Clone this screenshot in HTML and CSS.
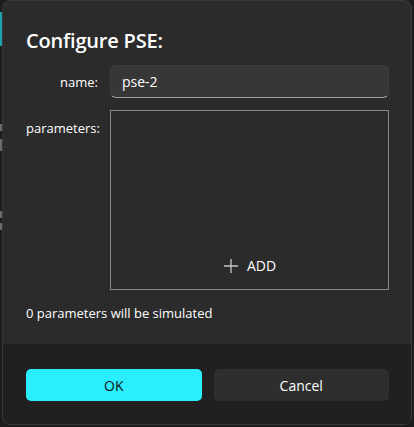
FILE: index.html
```html
<!DOCTYPE html>
<html>
<head>
<meta charset="utf-8">
<link rel="stylesheet" href="styles.css">
</head>
<body>
<div class="screen">
  <div class="strip">
    <div class="strip-gap g1"></div>
    <div class="strip-teal"></div>
    <div class="strip-gap g2"></div>
    <div class="strip-grey"></div>
    <div class="strip-gap g3"></div>
    <div class="strip-grey short"></div>
    <div class="strip-gap g4"></div>
    <div class="strip-grey"></div>
    <div class="strip-gap g5"></div>
    <div class="strip-grey"></div>
  </div>
  <div class="dialog">
    <div class="content">
      <h1 class="title">Configure PSE:</h1>
      <div class="form">
        <label class="label name-label">name:</label>
        <div class="input">pse-2</div>
        <label class="label params-label">parameters:</label>
        <div class="params">
          <button class="add">
            <svg class="plus" width="16" height="16" viewBox="0 0 16 16"><path d="M8 1v14M1 8h14" stroke="#c8c8c8" stroke-width="1.3" fill="none"/></svg>
            <span>ADD</span>
          </button>
        </div>
      </div>
      <p class="status">0 parameters will be simulated</p>
    </div>
    <div class="footer">
      <button class="btn ok">OK</button>
      <button class="btn cancel">Cancel</button>
    </div>
  </div>
</div>
</body>
</html>
```

FILE: styles.css
```css
html, body {
  margin: 0;
  padding: 0;
  background: #1c1c1c;
  width: 414px;
  height: 427px;
  overflow: hidden;
}
.screen {
  display: flex;
  font-family: "Open Sans", "Noto Sans", sans-serif;
  color: #ffffff;
}
.strip {
  width: 2px;
  display: flex;
  flex-direction: column;
}
.g1 { height: 12px; }
.strip-teal { height: 34px; background: #1aa3ad; }
.g2 { height: 78px; }
.strip-grey { height: 7px; background: #6a6a6a; }
.strip-grey.short { height: 12px; }
.g3 { height: 8px; }
.g4 { height: 60px; }
.g5 { height: 5px; }
.dialog {
  width: 410px;
  height: 425px;
  box-sizing: border-box;
  border: 1px solid #383838;
  border-radius: 8px;
  background: #2b2b2b;
  display: flex;
  flex-direction: column;
  overflow: hidden;
}
.content {
  flex: 1;
  padding: 26px 22px 0 23px;
}
.title {
  margin: 0;
  font-size: 20px;
  font-weight: 600;
  letter-spacing: -0.2px;
  line-height: 28px;
  color: #ffffff;
}
.form {
  margin-top: 10px;
  display: grid;
  grid-template-columns: 72px 279px;
  column-gap: 12px;
  row-gap: 12px;
}
.label {
  text-align: right;
  font-size: 13px;
  color: #ffffff;
}
.name-label {
  align-self: center;
}
.params-label {
  padding-top: 9px;
  line-height: 18px;
}
.input {
  height: 33px;
  box-sizing: border-box;
  background: #373737;
  border: 1px solid #3f3f3f;
  border-bottom: 1px solid #a0a0a0;
  border-radius: 6px;
  padding: 0 11px;
  font-size: 14px;
  line-height: 31px;
  color: #ffffff;
}
.params {
  height: 180px;
  box-sizing: border-box;
  border: 1px solid #8a8a8a;
  display: flex;
  align-items: flex-end;
  justify-content: center;
  padding-bottom: 14px;
}
.add {
  display: flex;
  align-items: center;
  gap: 8px;
  background: none;
  border: none;
  color: #ffffff;
  font-family: inherit;
  font-size: 14px;
  padding: 0;
}
.status {
  margin: 14px 0 0 0;
  font-size: 13px;
  line-height: 18px;
  color: #ffffff;
}
.footer {
  height: 80px;
  background: #202020;
  display: flex;
  gap: 12px;
  padding: 25px 22px 0 23px;
  box-sizing: border-box;
}
.btn {
  width: 176px;
  height: 32px;
  border: none;
  border-radius: 5px;
  font-family: inherit;
  font-size: 14px;
}
.ok {
  background: #2aeefd;
  color: #111111;
}
.cancel {
  background: #2e2e2e;
  color: #ffffff;
}
```
